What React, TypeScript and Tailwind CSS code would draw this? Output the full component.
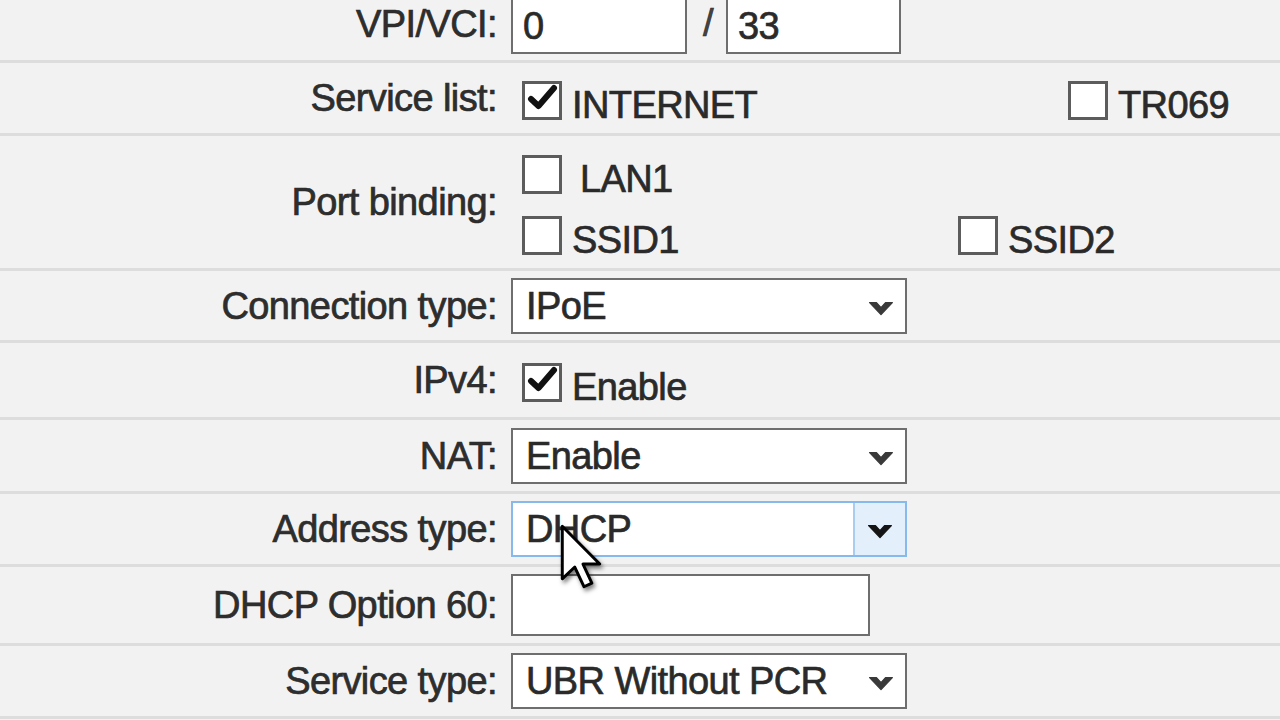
import React from "react";

const font = { fontFamily: '"Liberation Sans", Arial, sans-serif' };

function Chevron({ dark = false }: { dark?: boolean }) {
  return (
    <svg width="26" height="18" viewBox="0 0 24 16" className="shrink-0 translate-y-[2px]">
      <path
        d="M1.5 3 L7.8 3 L12 7.6 L16.2 3 L22.5 3 L12 14 Z"
        fill={dark ? "#151515" : "#3a3a3a"}
        stroke={dark ? "#151515" : "#3a3a3a"}
        strokeWidth="1.2"
        strokeLinejoin="round"
      />
    </svg>
  );
}

function Checkbox({ checked = false }: { checked?: boolean }) {
  return (
    <div className="w-[40px] h-[39px] border-[3px] border-[#5c5c5c] bg-white shrink-0 relative">
      {checked && (
        <svg className="absolute left-0 top-0" width="34" height="33" viewBox="0 0 34 33">
          <path
            d="M6 15 L13.5 22 L29 4"
            fill="none"
            stroke="#111"
            strokeWidth="6"
            strokeLinecap="round"
            strokeLinejoin="round"
          />
        </svg>
      )}
    </div>
  );
}

function Check({ checked = false, label, extraGap = false }: { checked?: boolean; label: string; extraGap?: boolean }) {
  return (
    <div className="flex items-end">
      <Checkbox checked={checked} />
      <span className={`${extraGap ? "ml-[18px]" : "ml-[10px]"} leading-none translate-y-[4px]`}>{label}</span>
    </div>
  );
}

function Select({ value }: { value: string }) {
  return (
    <div className="w-[396px] h-[56px] border-2 border-[#6e6e6e] bg-white flex items-center pl-[13px] pr-[11px]">
      <span className="flex-1 leading-none">{value}</span>
      <Chevron />
    </div>
  );
}

function Row({ label, h, children }: { label: string; h: string; children: React.ReactNode }) {
  return (
    <div className={`grid grid-cols-[497px_1fr] gap-x-[14px] border-b-[3px] border-[#dddddd] ${h} items-center`}>
      <div className="text-right leading-none text-[#2e2e2e]">{label}</div>
      <div className="flex items-center">{children}</div>
    </div>
  );
}

export default function App() {
  return (
    <div
      className="w-[1280px] h-[720px] overflow-hidden bg-[#f2f2f2] text-[#2a2a2a] relative"
      style={font}
    >
      <div className="-mt-[13px] text-[38px] tracking-[-0.6px] [-webkit-text-stroke:0.7px_#2a2a2a]">
        {/* VPI/VCI */}
        <Row label="VPI/VCI:" h="h-[76px]">
          <div className="w-[176px] h-[56px] border-2 border-[#6e6e6e] bg-white flex items-center pl-[10px] leading-none translate-y-[2px]">0</div>
          <span className="ml-[16px] mr-[13px] text-[#444]">/</span>
          <div className="w-[175px] h-[56px] border-2 border-[#6e6e6e] bg-white flex items-center pl-[10px] leading-none translate-y-[2px]">33</div>
        </Row>

        {/* Service list */}
        <Row label="Service list:" h="h-[73px]">
          <div className="ml-[11px] flex pt-[4px]">
            <div className="w-[546px]">
              <Check checked label="INTERNET" />
            </div>
            <Check label="TR069" />
          </div>
        </Row>

        {/* Port binding */}
        <Row label="Port binding:" h="h-[135px]">
          <div className="ml-[11px] flex flex-col gap-[22px] mt-[6px]">
            <Check label="LAN1" extraGap />
            <div className="flex">
              <div className="w-[436px]">
                <Check label="SSID1" />
              </div>
              <Check label="SSID2" />
            </div>
          </div>
        </Row>

        {/* Connection type */}
        <Row label="Connection type:" h="h-[72px]">
          <Select value="IPoE" />
        </Row>

        {/* IPv4 */}
        <Row label="IPv4:" h="h-[77px]">
          <div className="ml-[11px] pt-[4px]">
            <Check checked label="Enable" />
          </div>
        </Row>

        {/* NAT */}
        <Row label="NAT:" h="h-[74px]">
          <Select value="Enable" />
        </Row>

        {/* Address type */}
        <Row label="Address type:" h="h-[73px]">
          <div className="w-[396px] h-[56px] border-2 border-[#86b9ec] bg-white flex items-stretch">
            <span className="flex-1 flex items-center pl-[13px] leading-none">DHCP</span>
            <div className="w-[52px] bg-[#e3effb] border-l-2 border-[#a8cdf1] flex items-center justify-center">
              <Chevron dark />
            </div>
          </div>
        </Row>

        {/* DHCP Option 60 */}
        <Row label="DHCP Option 60:" h="h-[79px]">
          <div className="w-[359px] h-[62px] border-2 border-[#6e6e6e] bg-white" />
        </Row>

        {/* Service type */}
        <Row label="Service type:" h="h-[73px]">
          <Select value="UBR Without PCR" />
        </Row>
      </div>

      {/* mouse cursor */}
      <svg
        className="absolute left-[559px] top-[523px]"
        width="46"
        height="69"
        viewBox="0 0 14 21"
        style={{ filter: "drop-shadow(2px 3px 2px rgba(0,0,0,0.5))" }}
      >
        <path
          d="M1 1 L1 17 L4.8 13.4 L7.6 19.4 L10 18.3 L7.3 12.5 L12.4 12.5 Z"
          fill="#fff"
          stroke="#000"
          strokeWidth="0.9"
          strokeLinejoin="round"
        />
      </svg>
    </div>
  );
}
